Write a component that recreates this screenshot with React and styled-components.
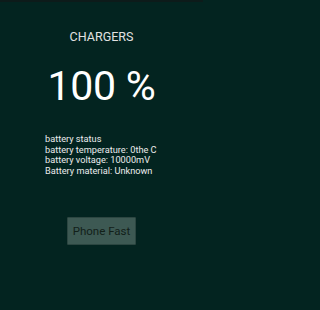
import React from 'react'
import styled, { createGlobalStyle } from 'styled-components'

const GlobalStyle = createGlobalStyle`
  html, body {
    margin: 0;
    padding: 0;
    background: #032420;
  }
`

const Screen = styled.div`
  width: 203px;
  height: 310px;
  box-sizing: border-box;
  background: #032420;
  border-top: 2px solid #0d1b1a;
  font-family: Roboto, "Liberation Sans", sans-serif;
  display: flex;
  flex-direction: column;
  align-items: center;
  color: #f2f2f2;
`

const Title = styled.div`
  margin-top: 27px;
  font-size: 12.5px;
  line-height: 15px;
  color: #e2e2e2;
`

const Percent = styled.div`
  margin-top: 18px;
  font-size: 41px;
  line-height: 48px;
  font-weight: 400;
  letter-spacing: -0.3px;
  color: #ffffff;
`

const Info = styled.div`
  margin-top: 24px;
  align-self: flex-start;
  padding-left: 45px;
  font-size: 9.2px;
  line-height: 10.7px;
  color: #ececec;
`

const PhoneButton = styled.button`
  margin-top: 40px;
  width: 69px;
  height: 28px;
  padding: 0;
  background: #3d5953;
  border: 1px solid #2c4641;
  border-radius: 1px;
  color: #122019;
  font-family: Roboto, "Liberation Sans", sans-serif;
  font-size: 11.5px;
`

const App = () => {
  return (
    <>
      <GlobalStyle />
      <Screen>
        <Title>CHARGERS</Title>
        <Percent>100 %</Percent>
        <Info>
          <div>battery status</div>
          <div>battery temperature: 0the C</div>
          <div>battery voltage: 10000mV</div>
          <div>Battery material: Unknown</div>
        </Info>
        <PhoneButton>Phone Fast</PhoneButton>
      </Screen>
    </>
  )
}

export default App
